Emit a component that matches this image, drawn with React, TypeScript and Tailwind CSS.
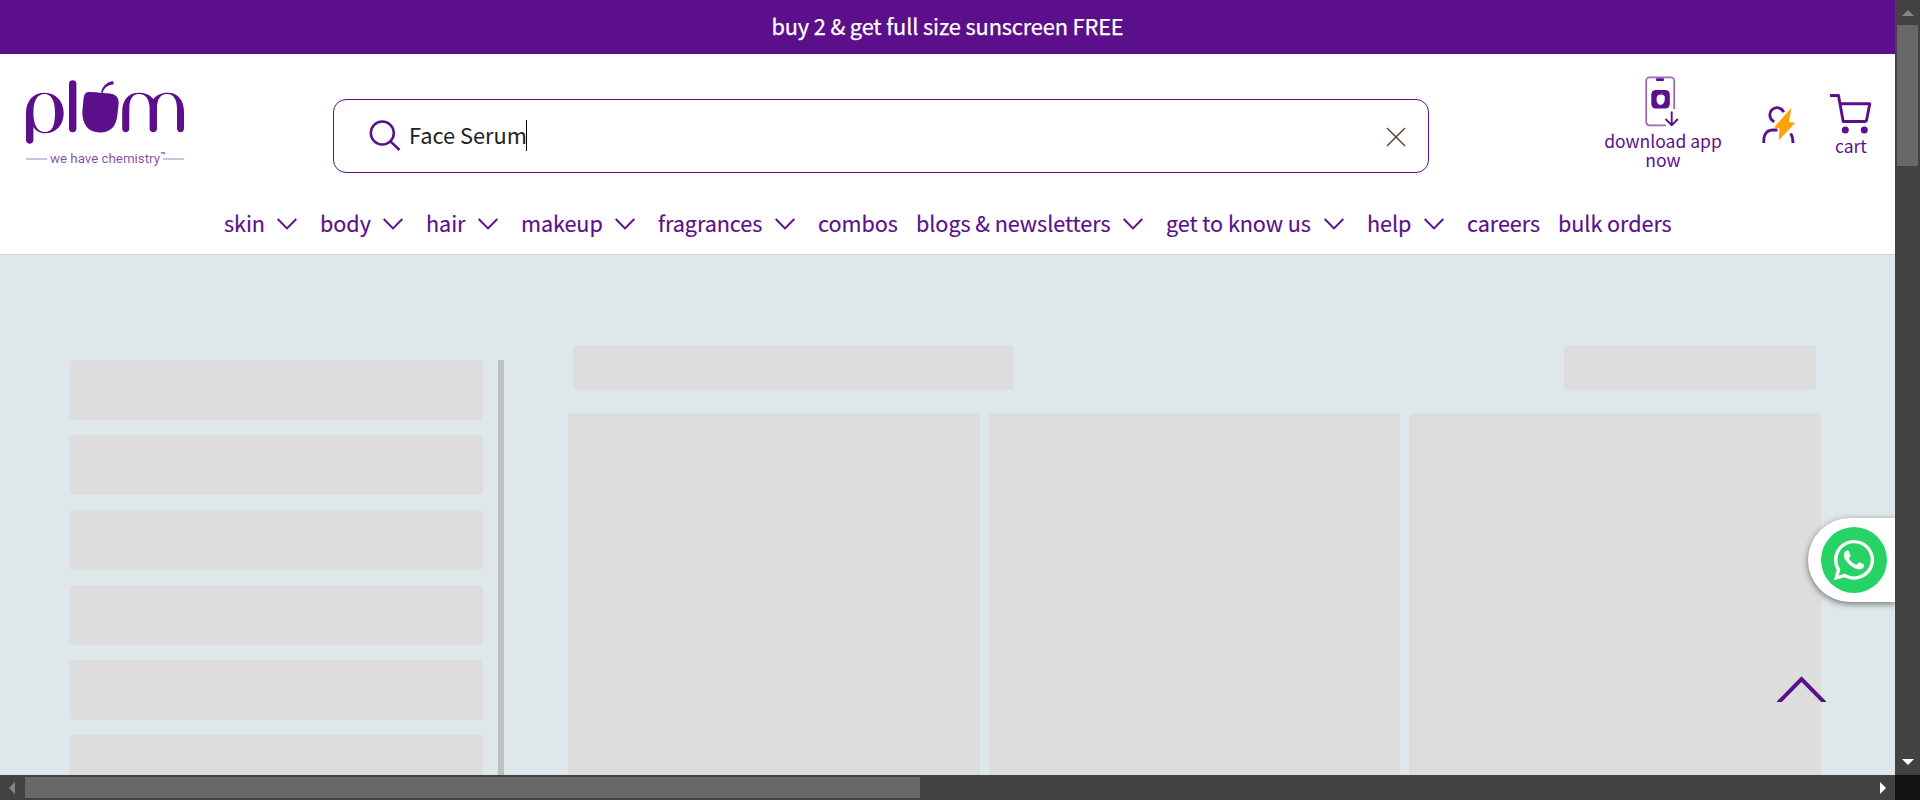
import React from "react";
import { FaWhatsapp } from "react-icons/fa";

const items: { label: string; width: string; arrow: boolean }[] = [
  { label: "skin", width: "w-[39px]", arrow: true },
  { label: "body", width: "w-[49px]", arrow: true },
  { label: "hair", width: "w-[38px]", arrow: true },
  { label: "makeup", width: "w-[80px]", arrow: true },
  { label: "fragrances", width: "w-[103px]", arrow: true },
  { label: "combos", width: "w-[79px]", arrow: false },
  { label: "blogs & newsletters", width: "w-[193px]", arrow: true },
  { label: "get to know us", width: "w-[144px]", arrow: true },
  { label: "help", width: "w-[43px]", arrow: true },
  { label: "careers", width: "w-[72px]", arrow: false },
  { label: "bulk orders", width: "w-[114px]", arrow: false },
];

function Logo() {
  return (
    <svg width="160" height="88" viewBox="0 0 160 88" fill="#5c0f8b">
      <rect x="43" y="0.3" width="7.4" height="52" rx="3.7" />
      <path fillRule="evenodd" d="M0 33C0 20 8 12.7 18.700 12.700C29.500 12.700 37.700 21 37.700 33C37.700 45 30 53.300 19 53.300C14 53.300 10 51 7.400 47V60C7.400 65 0 65 0 60ZM7.400 33C7.400 45 11.500 52 19 52C26 52 29 46 29 33C29 20 25 14 18.500 14C11.500 14 7.400 20 7.400 33Z" />
      <path d="M62 12Q69 11.500 75.200 13C75.500 8 79 2.500 87 1L87.800 4.300C81 5 77.300 9 76.700 13L84 13.500Q93 14.500 92.700 23L91.500 34C90.500 46 85 52.500 74 52.500C62 52.500 56.300 44 56.300 32L57.500 19Q58 12.500 62 12Z" />
      <path d="M96.200 32C96.200 20 102 12.700 113 12.700C119.500 12.700 124.500 15 127.300 19C130.500 15 135 12.700 141.500 12.700C152 12.700 158 20 158 32V48.500C158 53.500 151 53.500 151 48.500V29C151 20 148 14 141 14C134 14 131 20 131 28V48.500C131 53.500 123.600 53.500 123.600 48.500V28C123.600 20 120 14 113 14C106 14 103.300 20 103.300 29V48.500C103.300 53.500 96.200 53.500 96.200 48.500Z" />
      <path d="M0 79H21M137 79H158" stroke="#a77fc0" strokeWidth="1" />
      <text x="24" y="82.500" fontSize="12.800" textLength="110" lengthAdjust="spacingAndGlyphs" fillOpacity=".75" className="font-['Roboto',sans-serif]">we have chemistry</text>
      <text x="134.500" y="78" fontSize="8" className="font-['Roboto',sans-serif]">™</text>
    </svg>
  );
}

function PhoneIcon() {
  return (
    <svg className="-ml-[2px]" width="34" height="52" viewBox="0 0 34 52" fill="none">
      <path d="M29.200 33V5Q29.200 1.300 25.500 1.300H5Q1.200 1.300 1.200 5V45.500Q1.200 49.300 5 49.300H21" stroke="#9b6bb9" strokeWidth="1.800" />
      <rect x="11" y="2.200" width="8" height="2.800" rx="1" fill="#5c0f8b" />
      <rect x="6.300" y="14" width="18.500" height="18.500" rx="4.500" fill="#5c0f8b" />
      <path d="M12.500 20Q13.500 18.500 15.500 19.200Q18.500 18.500 19.500 20.500C20 25 18.500 28.500 15.500 28.700C12 28.500 11 24 12.500 20ZM15.500 19L17.300 17" fill="#fff" stroke="#fff" strokeWidth=".5" />
      <path d="M26.700 35.500V49M20.500 43L26.700 49.200L32.900 43" stroke="#5c0f8b" strokeWidth="1.900" />
    </svg>
  );
}

function UserIcon() {
  return (
    <svg width="34" height="38" viewBox="0 0 34 38" fill="none">
      <path d="M12.300 15.600A7.200 7.200 0 1 1 21.700 6.200" stroke="#5c0f8b" strokeWidth="2.800" />
      <path d="M1.800 37V34.500C1.800 27 6 24 11 24H15.500M28.700 27.500Q31 31 31 37" stroke="#5c0f8b" strokeWidth="2.800" />
      <path d="M29.500 1.500L12 21.500L17.500 22.500L16.700 34.500L33.300 16.700L27 16Z" fill="#ffa30a" />
    </svg>
  );
}

function CartIcon() {
  return (
    <svg width="42" height="42" viewBox="0 0 42 42" fill="none">
      <path d="M0 2.500H8.500L13.200 28.500H34.500Q36.300 28.500 36.700 26.500L39.800 10.800H10" stroke="#5c0f8b" strokeWidth="2.900" strokeLinejoin="round" />
      <circle cx="15.300" cy="37" r="3.500" fill="#5c0f8b" />
      <circle cx="34.300" cy="37" r="3.500" fill="#5c0f8b" />
    </svg>
  );
}

export default function App() {
  return (
    <div className="flex h-[800px] w-[1920px] flex-col overflow-hidden bg-[#424242] font-['Noto_Sans_CJK_SC',sans-serif] text-[#5c0f8b]">
      <div className="flex h-[775px]">
        <div className="relative flex w-[1895px] flex-col overflow-hidden bg-[#dee7ea]">
          <div className="flex h-[54px] shrink-0 items-center justify-center bg-[#5c0f8b] pb-[2px] text-white">
            <span className="whitespace-nowrap text-[21.8px] leading-none tracking-[-0.15px] [-webkit-text-stroke:0.25px_white]">buy 2 &amp; get full size sunscreen FREE</span>
          </div>
          <header className="h-[201px] shrink-0 border-b border-[#d5d8da] bg-white">
            <div className="flex h-[142px]">
              <div className="w-[333px] pl-[26px] pt-[26px]"><Logo /></div>
              <div className="mt-[45px] flex h-[74px] w-[1096px] items-center rounded-[13px] border border-[#5c0f8b] pl-[35px]">
                <svg width="32" height="32" viewBox="0 0 32 32" fill="none" stroke="#5c0f8b" strokeWidth="2.500">
                  <circle cx="13.300" cy="13" r="11.500" />
                  <path d="M21.500 21.300L30.500 30" />
                </svg>
                <span className="-mt-[2px] ml-[8px] w-[117px] whitespace-nowrap text-[21.8px] leading-none text-[#222]">Face Serum</span>
                <span className="-mt-[2px] h-[31px] w-px shrink-0 bg-black" />
                <svg className="ml-auto mr-[22px] mt-[2px]" width="20" height="20" viewBox="0 0 20 20" stroke="#5c4637" strokeWidth="1.500">
                  <path d="M1 1L19 19M19 1L1 19" />
                </svg>
              </div>
              <div className="ml-[174px] flex w-[120px] flex-col items-center pt-[22px]">
                <PhoneIcon />
                <span className="mt-[3px] whitespace-nowrap text-center text-[17.5px] leading-[19px]">download app<br />now</span>
              </div>
              <div className="ml-[39px] pt-[52px]"><UserIcon /></div>
              <div className="ml-[34px] flex w-[42px] flex-col items-center pt-[39px]">
                <CartIcon />
                <span className="mt-[1px] text-[17.5px] leading-[19px]">cart</span>
              </div>
            </div>
            <nav className="flex h-[56px] items-center pl-[224px]">
              {items.map((item) => (
                <div key={item.label} className={item.arrow ? "mr-[23px] flex items-center" : "mr-[19px] flex items-center"}>
                  <span className={`${item.width} -mt-[2px] whitespace-nowrap text-[21.6px] leading-none tracking-[-0.06px] [-webkit-text-stroke:0.15px_#5c0f8b]`}>{item.label}</span>
                  {item.arrow && (
                    <svg className="ml-[14px]" width="20" height="12" viewBox="0 0 20 12" fill="none" stroke="#5c0f8b" strokeWidth="1.900">
                      <path d="M.7 1L10 10.500L19.300 1" />
                    </svg>
                  )}
                </div>
              ))}
            </nav>
          </header>
          <main className="flex h-[520px] overflow-hidden pl-[70px]">
            <div className="mt-[105px] flex w-[413px] shrink-0 flex-col gap-[15px]">
              {[0, 1, 2, 3, 4, 5].map((i) => (
                <div key={i} className="h-[60px] shrink-0 rounded-[4px] bg-[#ddd]" />
              ))}
            </div>
            <div className="ml-[15px] mt-[105px] w-[6px] shrink-0 bg-[#bfbfbf]" />
            <div className="ml-[64px] w-[1253px] shrink-0 pt-[90px]">
              <div className="flex justify-between pl-[5px] pr-[5px]">
                <div className="h-[45px] w-[441px] rounded-[4px] bg-[#ddd]" />
                <div className="h-[45px] w-[252px] rounded-[4px] bg-[#ddd]" />
              </div>
              <div className="mt-[23px] grid grid-cols-3 gap-[9px]">
                {[0, 1, 2].map((i) => (
                  <div key={i} className="h-[500px] rounded-[4px] bg-[#ddd]" />
                ))}
              </div>
            </div>
          </main>
          <div className="absolute right-0 top-[518px] flex h-[84px] w-[87px] items-center rounded-l-full bg-white pl-[13px] shadow-[0_2px_6px_rgba(0,0,0,0.5)]">
            <div className="flex h-[66px] w-[66px] items-center justify-center rounded-full bg-[#27d367]">
              <FaWhatsapp size={46} color="#fff" />
            </div>
          </div>
          <svg className="absolute left-[1777px] top-[676px]" width="49" height="26" viewBox="0 0 49 26" fill="none" stroke="#5c0f8b" strokeWidth="4">
            <path d="M1 27L24.500 3L48 27" />
          </svg>
        </div>
        <div className="flex w-[25px] flex-col items-center justify-between pb-[10px] pt-[10px]">
          <div className="flex flex-col items-center">
            <svg width="12" height="6" viewBox="0 0 12 6" fill="#868686"><path d="M0 6L6 0L12 6Z" /></svg>
            <div className="mt-[9px] h-[141px] w-[21px] bg-[#686868]" />
          </div>
          <svg width="12" height="6" viewBox="0 0 12 6" fill="#fff"><path d="M0 0H12L6 6Z" /></svg>
        </div>
      </div>
      <div className="flex h-[25px]">
        <div className="flex w-[1895px] items-center justify-between pl-[9px] pr-[9px]">
          <div className="flex items-center">
            <svg width="6" height="12" viewBox="0 0 6 12" fill="#868686"><path d="M6 0V12L0 6Z" /></svg>
            <div className="ml-[10px] h-[21px] w-[895px] bg-[#686868]" />
          </div>
          <svg width="6" height="12" viewBox="0 0 6 12" fill="#fff"><path d="M0 0V12L6 6Z" /></svg>
        </div>
        <div className="w-[25px] bg-[#121212]" />
      </div>
    </div>
  );
}
